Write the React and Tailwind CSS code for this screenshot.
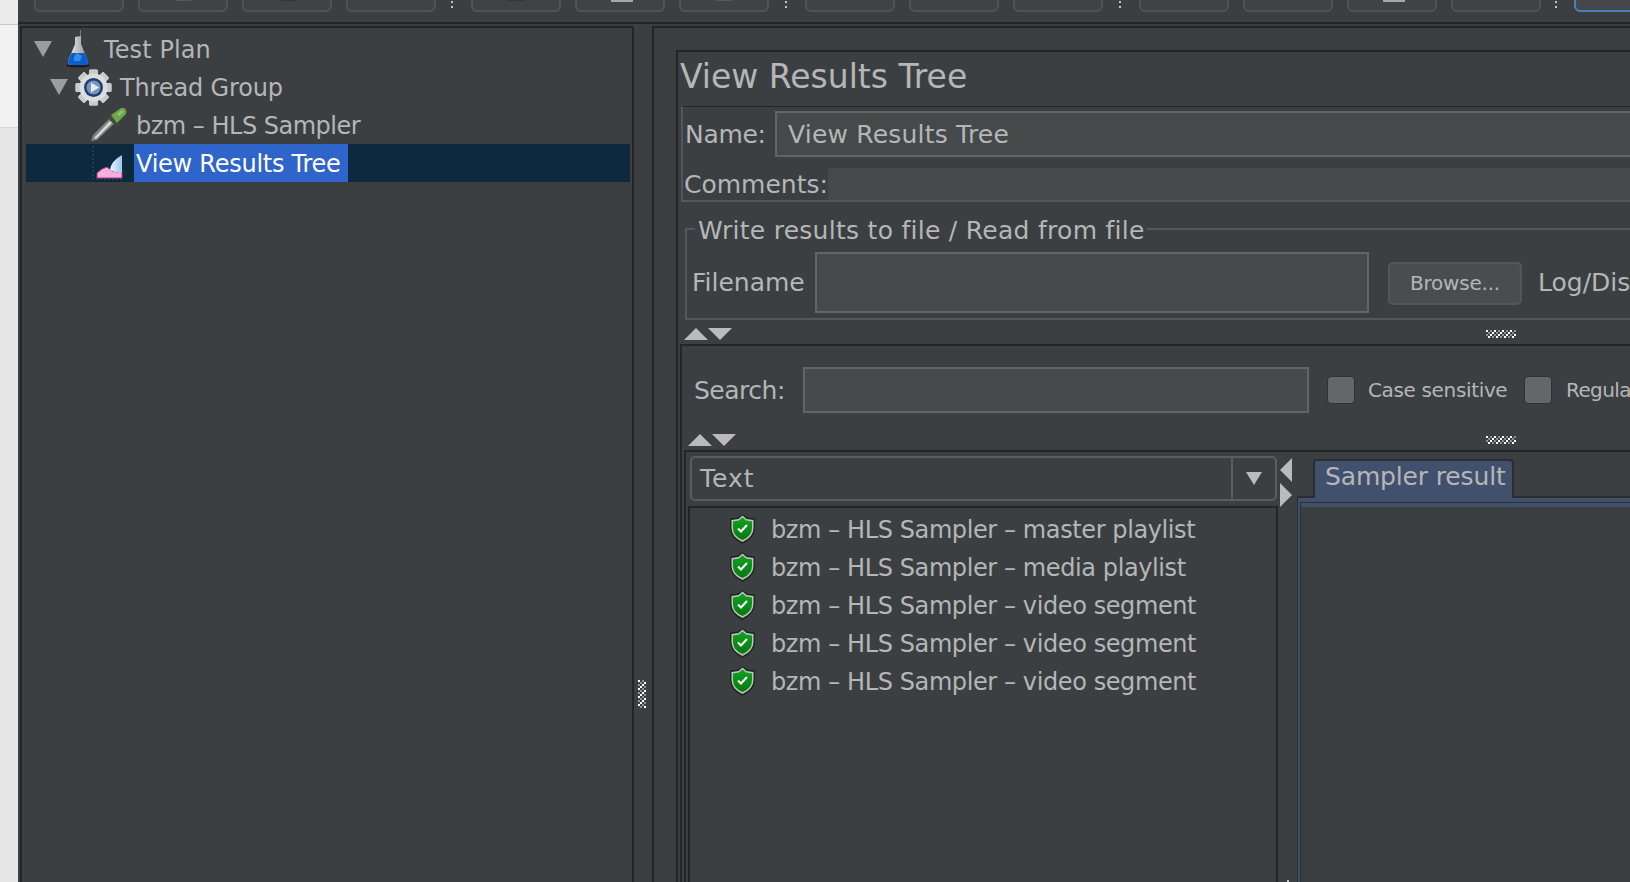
const font = "font-['DejaVu_Sans',sans-serif]"

function Tri({ dir, w, h, color = "#bbbbbb" }) {
    const pts = {
        up: `${w / 2},0 ${w},${h} 0,${h}`,
        down: `0,0 ${w},0 ${w / 2},${h}`,
        left: `${w},0 ${w},${h} 0,${h / 2}`,
        right: `0,0 ${w},${h / 2} 0,${h}`,
    }
    return (
        <svg width={w} height={h} className="block shrink-0">
            <polygon points={pts[dir]} fill={color} />
        </svg>
    )
}

// dotted grip of the split panes
function Grip({ w, h }) {
    const cells = []
    for (let y = 0; y < h; y += 2) {
        for (let x = 0; x < w; x += 2) {
            const k = (x / 2 + y / 2) % 4
            if (k === 0) cells.push(<rect key={`${x}-${y}`} x={x} y={y} width="2" height="2" fill="#ffffff" />)
            if (k === 2) cells.push(<rect key={`${x}-${y}`} x={x} y={y} width="2" height="2" fill="#8f9192" />)
        }
    }
    return <svg width={w} height={h} className="block shrink-0">{cells}</svg>
}

function Flask() {
    return (
        <svg width="26" height="38" viewBox="0 0 26 38" className="block shrink-0">
            <defs>
                <linearGradient id="flaskGlass" x1="0" x2="1" y1="0" y2="0">
                    <stop offset="0" stopColor="#eeeeef" />
                    <stop offset="1" stopColor="#8d8f92" />
                </linearGradient>
            </defs>
            <ellipse cx="13" cy="35.5" rx="12" ry="2" fill="#1b1d1f" />
            <path d="M15 0 L16 0 L16 7 L15 7 Z" fill="#77797c" />
            <path d="M10 7 L16 6 L16 14 L23 31 Q23.5 35 20 35 L6 35 Q2.5 35 3 31 L10 14 Z" fill="url(#flaskGlass)" />
            <path d="M6.5 23 L19.5 23 L23 31 Q23.5 35 20 35 L6 35 Q2.5 35 3 31 Z" fill="#0a5fd0" />
            <path d="M9 27 L12 23 L17 26 L15 31 L9 31 Z" fill="#3c8ae8" />
        </svg>
    )
}

function Gear() {
    const teeth = [0, 45, 90, 135, 180, 225, 270, 315]
    return (
        <svg width="37" height="37" viewBox="0 0 37 37" className="block shrink-0">
            {teeth.map((a) => (
                <rect key={a} x="14" y="0.5" width="9" height="36" rx="1.5" fill="#c9cacb" transform={`rotate(${a} 18.5 18.5)`} />
            ))}
            <circle cx="18.5" cy="18.5" r="14" fill="#dcdddd" />
            <circle cx="18.5" cy="18.5" r="9.5" fill="#1c3f73" />
            <circle cx="18.5" cy="18.5" r="7" fill="#7c93b8" />
            <polygon points="16,13.5 24,18.5 16,23.5" fill="#e6ebf3" />
        </svg>
    )
}

function Dropper() {
    return (
        <svg width="38" height="34" viewBox="0 0 38 34" className="block shrink-0">
            <path d="M1 33 L3 27 L21 9 L26 14 L7 32 Z" fill="#7f8183" />
            <path d="M4 30 L20 13 L22 15 L6 31 Z" fill="#d9dadb" />
            <path d="M17 9 L19 7 L28 16 L26 18 Z" fill="#3d4a38" />
            <path d="M21 7 L31 0 Q34 -1 36 2 Q37 5 35 7 L27 15 Z" fill="#6ea64d" />
            <path d="M27 6 L32 2 L34 4 L29 8 Z" fill="#8fc46c" />
        </svg>
    )
}

function ChartIcon() {
    return (
        <svg width="33" height="36" viewBox="0 0 33 36" className="block shrink-0">
            <defs>
                <linearGradient id="chartBlue" x1="0" x2="1" y1="0" y2="0">
                    <stop offset="0" stopColor="#eef6ff" />
                    <stop offset="1" stopColor="#9cc4ee" />
                </linearGradient>
            </defs>
            <path d="M1 1 L1 34 L32 34" fill="none" stroke="#3f5264" strokeWidth="1" strokeDasharray="2 2" />
            <path d="M5 33 L5 28 L10 24 L15 22 L20 26 L25 27 L30 25 L30 33 Z" fill="#f5b0e0" stroke="#a83a78" strokeWidth="1" />
            <path d="M18 25 Q19 16 30 10 L30 27 L23 27 Z" fill="url(#chartBlue)" />
        </svg>
    )
}

function Shield() {
    return (
        <svg width="27" height="30" viewBox="0 0 27 30" className="block shrink-0">
            <defs>
                <linearGradient id="shieldGreen" x1="0" x2="0" y1="0" y2="1">
                    <stop offset="0" stopColor="#0fa31f" />
                    <stop offset="1" stopColor="#06780f" />
                </linearGradient>
            </defs>
            <path d="M13.5 0 L18 3.5 L26 4.5 L26 14 Q26 24 13.5 30 Q1 24 1 14 L1 4.5 L9 3.5 Z" fill="#1d2b1f" />
            <path d="M13.5 1.5 L17.5 5 L24.5 6 L24.5 14 Q24.5 23 13.5 28 Q2.5 23 2.5 14 L2.5 6 L9.5 5 Z" fill="#bfc3bf" />
            <path d="M13.5 3.5 L17 6.5 L23 7.5 L23 14 Q23 22 13.5 26 Q4 22 4 14 L4 7.5 L10 6.5 Z" fill="url(#shieldGreen)" />
            <path d="M9 14.5 L12 17.5 L18 11" fill="none" stroke="#ffffff" strokeWidth="2" />
        </svg>
    )
}

function ToolButton({ mark }) {
    return (
        <div className="w-[90px] h-[30px] shrink-0 rounded-[6px] border-2 border-[#505355] bg-[#404345] flex items-start justify-center">
            {mark}
        </div>
    )
}

function ToolDots({ className }) {
    return (
        <div className={`w-[2px] shrink-0 mb-[4px] flex flex-col gap-[3px] ${className}`}>
            <div className="w-[2px] h-[2px] bg-[#c4c4c4]" />
            <div className="w-[2px] h-[2px] bg-[#c4c4c4]" />
        </div>
    )
}

function ToolGroup({ marks }) {
    return (
        <div className="flex items-end gap-[14px] shrink-0">
            {marks.map((m, i) => (
                <ToolButton key={i} mark={m} />
            ))}
        </div>
    )
}

const lightMark = <div className="w-[22px] h-[2px] mt-[16px] ml-[4px] bg-[#a8a8a8]" />
const faintMark = <div className="w-[16px] h-[1px] mt-[16px] bg-[#56595b]" />
const darkMark = <div className="w-[16px] h-[1px] mt-[16px] bg-[#333537]" />

function TreeRow({ lead, icon, label, textClass, selected }) {
    return (
        <div className={`h-[38px] flex items-center ${selected ? "bg-[#0d293e]" : ""}`}>
            {lead}
            {icon}
            <div className={`h-[38px] pt-[2px] flex items-center text-[24px] whitespace-nowrap shrink-0 ${textClass}`}>
                {label}
            </div>
        </div>
    )
}

function ResultRow({ label }) {
    return (
        <div className="h-[38px] flex items-center pl-[39px] gap-[15px]">
            <Shield />
            <span className="text-[24px] tracking-[-0.4px] pt-[1px] text-[#b4b6b7] whitespace-nowrap">{label}</span>
        </div>
    )
}

export default function App() {
    return (
        <div className={`flex w-[1630px] h-[882px] overflow-hidden bg-[#3c3f41] ${font}`}>
            {/* strip of the window behind */}
            <div className="w-[18px] shrink-0 flex flex-col">
                <div className="h-[25px] bg-[#ececec] border-b border-[#c8c8c8]" />
                <div className="h-[103px] bg-[#f2f2f2] border-b border-[#d6d6d6]" />
                <div className="flex-1 bg-[#e6e6e6]" />
            </div>

            <div className="flex-1 min-w-0 flex flex-col">
                {/* toolbar, cut off by the top of the crop */}
                <div className="h-[24px] shrink-0 border-b-2 border-[#232527] overflow-hidden flex items-end pb-[10px] pl-[16px]">
                    <ToolGroup marks={[null, faintMark, darkMark, null]} />
                    <ToolDots className="ml-[15px] mr-[18px]" />
                    <ToolGroup marks={[darkMark, lightMark, faintMark]} />
                    <ToolDots className="ml-[16px] mr-[18px]" />
                    <ToolGroup marks={[null, null, null]} />
                    <ToolDots className="ml-[16px] mr-[18px]" />
                    <ToolGroup marks={[null, null, lightMark, null]} />
                    <ToolDots className="ml-[14px] mr-[17px]" />
                    <div className="w-[90px] h-[30px] shrink-0 rounded-[6px] border-2 border-[#4a7fb8] bg-[#45484a]" />
                </div>

                <div className="flex-1 min-h-0 flex mt-[2px]">
                    {/* test plan tree */}
                    <div className="ml-[2px] w-[614px] shrink-0 border-l-2 border-r-2 border-t-2 border-[#232527] pl-[4px] pr-[2px] pt-[2px]">
                        <TreeRow
                            lead={<div className="ml-[8px] mr-[13px]"><Tri dir="down" w={18} h={16} color="#9c9d9e" /></div>}
                            icon={<Flask />}
                            label="Test Plan"
                            textClass="ml-[13px] tracking-[0.1px] text-[#b4b6b7]"
                        />
                        <TreeRow
                            lead={<div className="ml-[24px] mr-[7px]"><Tri dir="down" w={18} h={16} color="#9c9d9e" /></div>}
                            icon={<Gear />}
                            label="Thread Group"
                            textClass="ml-[8px] tracking-[-0.15px] text-[#b4b6b7]"
                        />
                        <TreeRow
                            lead={<div className="w-[64px] shrink-0" />}
                            icon={<Dropper />}
                            label="bzm – HLS Sampler"
                            textClass="ml-[8px] tracking-[-0.5px] text-[#b4b6b7]"
                        />
                        <TreeRow
                            selected
                            lead={<div className="w-[66px] shrink-0" />}
                            icon={<ChartIcon />}
                            label="View Results Tree"
                            textClass="ml-[9px] w-[214px] pl-[2px] tracking-[-0.25px] bg-[#2f65ca] text-white"
                        />
                    </div>

                    <div className="w-[18px] shrink-0 pt-[654px] pl-[4px]">
                        <Grip w={8} h={28} />
                    </div>

                    {/* element panel */}
                    <div className="flex-1 min-w-0 border-l-2 border-t-2 border-[#232527] pl-[22px] pt-[22px] flex">
                        <div className="flex-1 min-w-0 border-l-2 border-t-2 border-[#232527] flex flex-col">
                            <div className="h-[54px] shrink-0 pl-[2px] pb-[4px] flex items-center text-[33px] text-[#b4b6b7] whitespace-nowrap">View Results Tree</div>

                            <div className="shrink-0 ml-[3px] h-[96px] border-t border-l-2 border-b-2 border-t-[#232527] border-l-[#55585a] border-b-[#55585a] flex flex-col">
                                <div className="mt-[4px] h-[46px] flex items-center">
                                    <span className="w-[92px] shrink-0 pl-[2px] pt-[2px] text-[25px] tracking-[-0.3px] text-[#b4b6b7]">Name:</span>
                                    <div className="flex-1 h-[46px] bg-[#45494a] border-y-2 border-l-2 border-[#646464] pl-[11px] pt-[2px] flex items-center text-[25px] tracking-[0.2px] text-[#b4b6b7] whitespace-nowrap">View Results Tree</div>
                                </div>
                                <div className="mt-[11px] h-[32px] flex items-center">
                                    <span className="w-[145px] shrink-0 pl-[1px] pt-[2px] text-[25px] text-[#b4b6b7]">Comments:</span>
                                    <div className="flex-1 h-[32px] bg-[#45494a]" />
                                </div>
                            </div>

                            {/* write results fieldset */}
                            <div className="shrink-0 ml-[7px] h-[118px] flex flex-col">
                                <div className="h-[44px] flex items-start">
                                    <div className="w-[10px] h-[18px] mt-[26px] border-l-2 border-t-2 border-[#55585a]" />
                                    <span className="mt-[12px] ml-[3px] text-[25px] leading-[34px] tracking-[0.28px] text-[#b4b6b7] whitespace-nowrap">Write results to file / Read from file</span>
                                    <div className="flex-1 h-[2px] mt-[26px] ml-[2px] bg-[#55585a]" />
                                </div>
                                <div className="flex-1 border-l-2 border-b-2 border-[#55585a] flex items-start pl-[5px] pt-[6px]">
                                    <span className="w-[123px] h-[61px] shrink-0 flex items-center text-[25px] text-[#b4b6b7]">Filename</span>
                                    <div className="w-[554px] h-[61px] shrink-0 bg-[#45494a] border-2 border-[#646464]" />
                                    <button className="ml-[19px] mt-[10px] w-[134px] h-[43px] pb-[2px] shrink-0 rounded-[5px] border-2 border-[#535658] bg-[#494d4f] text-[20px] tracking-[-0.2px] text-[#b4b6b7]">Browse...</button>
                                    <span className="ml-[16px] h-[61px] shrink-0 flex items-center text-[25px] text-[#b4b6b7] whitespace-nowrap">Log/Dis</span>
                                </div>
                            </div>

                            {/* first split */}
                            <div className="h-[24px] shrink-0 flex items-start pl-[6px] pt-[8px]">
                                <Tri dir="up" w={24} h={12} />
                                <Tri dir="down" w={24} h={12} />
                                <div className="ml-[754px] mt-[2px]"><Grip w={30} h={8} /></div>
                            </div>

                            <div className="ml-[2px] flex-1 min-h-0 border-l-2 border-t-2 border-[#232527] flex flex-col">
                                <div className="shrink-0 h-[67px] pt-[21px] pl-[12px] flex items-start">
                                    <span className="w-[109px] h-[46px] shrink-0 pt-[2px] flex items-center text-[25px] tracking-[-0.5px] text-[#b4b6b7]">Search:</span>
                                    <div className="w-[506px] h-[46px] shrink-0 bg-[#45494a] border-2 border-[#646464]" />
                                    <div className="ml-[18px] mt-[9px] w-[28px] h-[28px] shrink-0 rounded-[4px] border border-[#2f3133] bg-[#646668]" />
                                    <span className="ml-[13px] w-[156px] h-[46px] shrink-0 flex items-center text-[20px] tracking-[-0.35px] text-[#b4b6b7] whitespace-nowrap">Case sensitive</span>
                                    <div className="mt-[9px] w-[28px] h-[28px] shrink-0 rounded-[4px] border border-[#2f3133] bg-[#646668]" />
                                    <span className="ml-[14px] h-[46px] shrink-0 flex items-center text-[20px] tracking-[-0.6px] text-[#b4b6b7] whitespace-nowrap">Regula</span>
                                </div>

                                {/* second split */}
                                <div className="h-[37px] shrink-0 flex items-start pl-[6px] pt-[21px]">
                                    <Tri dir="up" w={24} h={12} />
                                    <Tri dir="down" w={24} h={12} />
                                    <div className="ml-[750px] mt-[2px]"><Grip w={30} h={8} /></div>
                                </div>

                                <div className="ml-[2px] flex-1 min-h-0 border-l-2 border-t-2 border-[#232527] flex">
                                    {/* result list */}
                                    <div className="w-[592px] shrink-0 flex flex-col">
                                        <div className="mt-[4px] ml-[4px] w-[587px] h-[45px] shrink-0 rounded-[5px] border-2 border-[#5a5c5e] flex">
                                            <div className="flex-1 pl-[8px] flex items-center text-[25px] tracking-[1px] text-[#b4b6b7]">Text</div>
                                            <div className="w-[44px] border-l-2 border-[#5a5c5e] flex items-center justify-center">
                                                <Tri dir="down" w={16} h={13} />
                                            </div>
                                        </div>
                                        <div className="mt-[5px] ml-[2px] flex-1 min-h-0 border-l-2 border-r-2 border-t-2 border-[#232527] pt-[2px]">
                                            <ResultRow label="bzm – HLS Sampler – master playlist" />
                                            <ResultRow label="bzm – HLS Sampler – media playlist" />
                                            <ResultRow label="bzm – HLS Sampler – video segment" />
                                            <ResultRow label="bzm – HLS Sampler – video segment" />
                                            <ResultRow label="bzm – HLS Sampler – video segment" />
                                        </div>
                                    </div>

                                    {/* vertical split */}
                                    <div className="w-[19px] shrink-0 pl-[2px] pt-[6px] flex flex-col">
                                        <Tri dir="left" w={12} h={24} />
                                        <div className="mt-[1px]"><Tri dir="right" w={12} h={24} /></div>
                                        <div className="mt-auto ml-[7px] w-[2px] h-[2px] bg-[#c4c4c4]" />
                                    </div>

                                    {/* sampler tabs */}
                                    <div className="flex-1 min-w-0 flex flex-col pt-[7px]">
                                        <div className="h-[37px] shrink-0 pl-[16px] flex">
                                            <div className="w-[201px] h-[39px] rounded-t-[4px] border-x-2 border-t-2 border-[#2b2d2f] bg-[#41516d] pl-[10px] pb-[6px] flex items-center text-[25px] tracking-[-0.15px] text-[#b4b6b7] whitespace-nowrap z-10">Sampler result</div>
                                        </div>
                                        <div className="flex-1 min-h-0 border-t-2 border-l border-[#2b2d2f] bg-[#41516d] pt-[3px] pl-[2px] flex">
                                            <div className="flex-1 border-t border-l border-[#2b2d2f] mt-[1px]">
                                                <div className="h-full mt-[4px] bg-[#3c3f41]" />
                                            </div>
                                        </div>
                                    </div>
                                </div>
                            </div>
                        </div>
                    </div>
                </div>
            </div>
        </div>
    )
}
